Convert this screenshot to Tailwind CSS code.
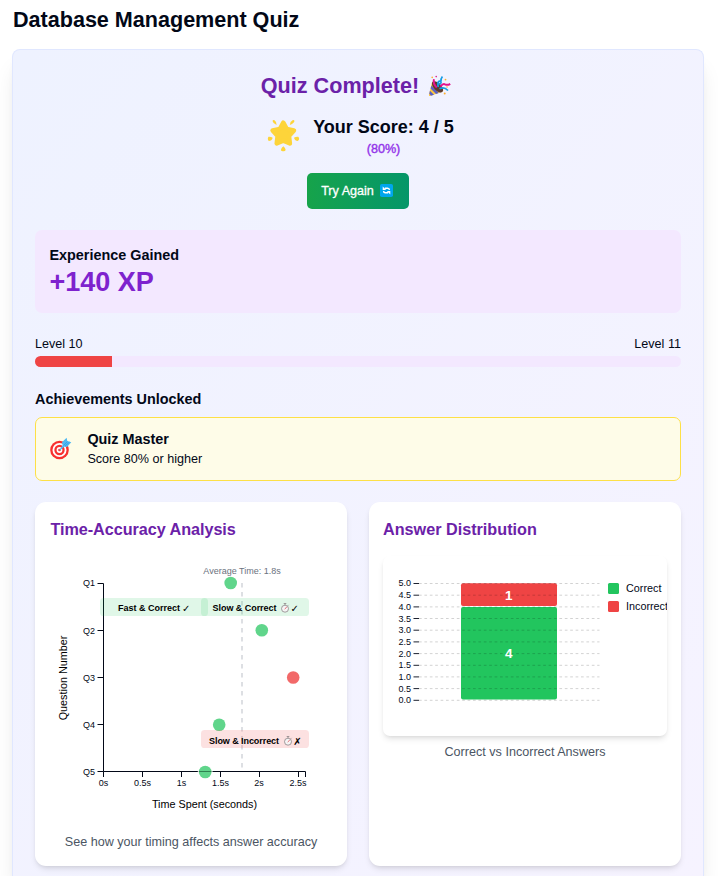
<!DOCTYPE html>
<html lang="en">
<head>
<meta charset="utf-8">
<title>Database Management Quiz</title>
<script src="https://cdn.jsdelivr.net/npm/@tailwindcss/browser@4"></script>
</head>
<body class="bg-white text-[#020817] font-['Liberation_Sans',Arial,sans-serif]">
<main class="h-[876px] overflow-hidden px-3">
  <h1 class="h-[49px] pt-[5px] pl-px text-[21.6px] leading-[29px] font-bold tracking-[-0.02px]">Database Management Quiz</h1>
  <section class="w-[692px] h-[827px] rounded-t-lg border border-b-0 border-[#e0e7ff] bg-linear-to-br from-[#eef2ff] to-[#f6f3ff] shadow-[0_18px_22.5px_-4.5px_rgba(0,0,0,0.1),0_7px_9px_-5px_rgba(0,0,0,0.1)] px-[22px] pt-[22px]">
    <div class="flex flex-col items-center">
      <h2 class="flex items-center gap-[9px] h-[27px] text-[21.6px] leading-[27px] font-bold text-[#6b21a8] mr-[4px]">Quiz Complete!
        <svg class="w-[23px] h-[22px]" viewBox="0 0 23 22">
          <path d="M4 7.5 Q8 5.5 12.500 10 Q16.500 14 14.700 16.500 L2.200 21 Q.6 21.400 1 19.500Z" fill="#ffc83d"/>
          <path d="M3.400 10.500 L10.800 17.900 L8 18.900 L2.600 13.500Z M1.900 15.800 L6 19.700 L3 20.700 L1.300 18.800Z" fill="#5b62c5"/>
          <ellipse cx="9.500" cy="11.800" rx="3.700" ry="7" transform="rotate(-45 9.500 11.800)" fill="#5b3a2e"/>
          <path d="M8.800 12.500 Q4.600 8.500 6 4.200" fill="none" stroke="#e3148d" stroke-width="2"/>
          <path d="M10.300 12 Q9 6.800 11.400 6 Q14 6 12.600 8.500 Q11 9.500 10.300 7.500 M13 6.500 Q12.500 4 14.400 1.500 M11.500 13.700 Q16 11.200 20 15.500" fill="none" stroke="#169de4" stroke-width="1.700"/>
          <path d="M12.500 11.600 Q15 8 17 9.300 Q19.500 10.600 22.200 8.800" fill="none" stroke="#e3148d" stroke-width="2"/>
          <g fill="#ffb02e"><circle cx="4.200" cy="2.400" r=".8"/><circle cx="17.500" cy="4.600" r=".9"/><circle cx="16.700" cy="18.500" r="1"/><circle cx="19" cy="12" r=".8"/></g>
          <circle cx="8.200" cy="1.600" r=".8" fill="#d91d87"/>
        </svg>
      </h2>
      <div class="flex gap-[13px] mt-[14px] h-[47px] mr-[-6px]">
        <svg class="w-[33px] h-[33px] mt-[6px] ml-[-1px]" viewBox="0 0 33 33" fill="#fdd43a">
          <path d="M16.300 3.600 L19.800 10 L27 11.400 L22 16.900 L22.900 24.400 L16.300 21.600 L9.700 24.400 L10.600 16.900 L5.600 11.400 L12.800 10Z" stroke="#fdd43a" stroke-width="4.500" stroke-linejoin="round"/>
          <path d="M5.500 2 Q6 .5 7.500 1.200 Q9.500 2.400 9.600 6 Q6 4.600 5.500 2ZM27.500 2 Q27 .5 25.500 1.200 Q23 2.400 22.800 6 Q26.800 4.600 27.500 2ZM1.500 17.800 Q4 17.600 5.700 18.700 Q4.800 22 1.800 22 Q0 20 1.500 17.800ZM31.200 17.800 Q28.800 17.600 27 18.700 Q28 22 30.700 22 Q33.300 20 31.200 17.800ZM16.300 27.200 Q18.500 29 18.700 31 Q18 32.500 16.300 32.300 Q14.300 32.500 13.900 31 Q14.200 29 16.300 27.200Z"/>
        </svg>
        <div class="pt-[2px] text-center">
          <div class="text-[18px] leading-[25px] font-bold">Your Score: 4 / 5</div>
          <div class="mt-[-1px] text-[12.6px] leading-[20px] text-[#9333ea] [-webkit-text-stroke:0.4px_#9333ea]">(80%)</div>
        </div>
      </div>
      <button class="mt-[13px] flex w-[102px] h-[36px] items-center justify-center gap-[6px] rounded-[5px] bg-linear-to-r from-[#16a34a] to-[#059669] pr-[2px] text-[12.6px] leading-[18px] text-white [-webkit-text-stroke:0.3px_white]">Try Again
        <svg class="w-[13px] h-[13px] mt-[-1px]" viewBox="0 0 13 13"><rect width="13" height="13" rx="1.8" fill="#00a6ed"/><path d="M4.800 4.200H7.700Q9.400 4.200 9.400 6 M8.200 8.800H5.300Q3.600 8.800 3.600 7" fill="none" stroke="white" stroke-width="1.4"/><path d="M2.700 2.600V6.100H6.200ZM10.300 10.400V6.900H6.800Z" fill="white"/></svg>
      </button>
    </div>

    <div class="mt-[21px] h-[83px] rounded-[7px] bg-[#f3e8ff] px-[14.400px] pt-[15px]">
      <h3 class="text-[14.4px] leading-[21px] font-bold">Experience Gained</h3>
      <p class="text-[27px] leading-[32px] font-bold text-[#7e22ce]">+140 XP</p>
    </div>

    <div class="mt-[22px] flex h-[21px] justify-between text-[12.6px] leading-[18px]"><span>Level 10</span><span>Level 11</span></div>
    <div class="h-[11px] overflow-hidden rounded-full bg-[#f3e8ff]"><div class="h-full w-[77px] bg-[#ef4444]"></div></div>

    <h3 class="mt-[22px] h-[28px] text-[14.4px] leading-[21px] font-bold">Achievements Unlocked</h3>
    <div class="flex h-[64px] items-center gap-[15px] rounded-[7px] border border-[#fde047] bg-[#fefce8] px-[13.400px] pb-px">
      <svg class="w-[23px] h-[23px]" viewBox="0 0 23 23">
        <circle cx="10.500" cy="13" r="9.300" fill="#f8312f"/><circle cx="10.500" cy="13" r="7" fill="white"/><circle cx="10.500" cy="13" r="5.200" fill="#f8312f"/><circle cx="10.500" cy="13" r="2.900" fill="white"/><circle cx="10.500" cy="13" r="1.300" fill="#f8312f"/>
        <path d="M10.200 13 L13.600 8.500 L13 5.200 L17.600 .8 L18.300 4 L22.300 5.200 L18 10 L15 9.800 L11 13.600Z" fill="#50b9f2"/>
        <path d="M14.500 8.500 L18.500 4.500 M16 9 L20.500 5" stroke="#2796e0" stroke-width=".6"/>
      </svg>
      <div>
        <div class="text-[14.4px] leading-[21px] font-bold">Quiz Master</div>
        <div class="text-[12.6px] leading-[19px]">Score 80% or higher</div>
      </div>
    </div>

    <div class="mt-[21px] grid grid-cols-2 gap-[22px]">
      <article class="h-[364px] rounded-[11px] bg-white px-[14px] pt-[15px] shadow-md">
        <h3 class="h-[37px] pl-[1.400px] text-[16.2px] leading-[25px] font-bold text-[#6b21a8] tracking-[-0.04px]">Time-Accuracy Analysis</h3>
        <svg class="block w-[284px] h-[270px]" viewBox="49 554 284 270" font-family="Liberation Sans, Arial, sans-serif" fill="#020817">
          <path d="M97.5 583.5H103.5V771.5H97.5M97.5 630.5H103.5M97.5 677.5H103.5M97.5 724.5H103.5" fill="none" stroke="#020817"/>
          <path d="M103.5 777V771.5H305.5V777M142.5 771.5V777M181.5 771.5V777M220.5 771.5V777M259.5 771.5V777M298.5 771.5V777" fill="none" stroke="#020817"/>
          <g font-size="9" text-anchor="end">
            <text x="95" y="586">Q1</text><text x="95" y="633.5">Q2</text><text x="95" y="680.5">Q3</text><text x="95" y="728">Q4</text><text x="95" y="775">Q5</text>
          </g>
          <g font-size="9" text-anchor="middle">
            <text x="103.5" y="786">0s</text><text x="142.5" y="786">0.5s</text><text x="181.5" y="786">1s</text><text x="220.5" y="786">1.5s</text><text x="259" y="786">2s</text><text x="298" y="786">2.5s</text>
          </g>
          <text x="204.500" y="808" font-size="10.8" text-anchor="middle" fill="#000">Time Spent (seconds)</text>
          <text transform="translate(67 678) rotate(-90)" font-size="10.8" text-anchor="middle" fill="#000">Question Number</text>
          <circle cx="205.200" cy="772" r="7.500" fill="white" opacity=".8"/>
          <g fill="#22c55e"><circle cx="230.700" cy="583" r="6.300" opacity=".72"/><circle cx="261.800" cy="630.300" r="6.300" opacity=".72"/><circle cx="219.200" cy="724.700" r="6.300" opacity=".72"/><circle cx="205.200" cy="772" r="6.300" opacity=".72"/></g>
          <circle cx="293.200" cy="677.500" r="6.300" fill="#ef4444" opacity=".8"/>
          <path d="M199 771.500H211.500" stroke="#0b3b22" stroke-opacity=".5"/>
          <path d="M242 583V771" stroke="#d5d7dd" stroke-width="1.600" stroke-dasharray="4.500 4.500"/>
          <text x="242" y="574" font-size="9" text-anchor="middle" fill="#6b7280">Average Time: 1.8s</text>
          <g fill="#22c55e"><rect x="100" y="598" width="108" height="18" rx="3.600" fill-opacity=".14"/><rect x="201" y="598" width="108" height="18" rx="3.600" fill-opacity=".14"/></g>
          <rect x="201" y="730" width="108" height="18" rx="3.600" fill="#ef4444" fill-opacity=".16"/>
          <g font-size="9" font-weight="bold" fill="#000">
            <text x="118" y="611" textLength="62">Fast &amp; Correct</text><text x="182" y="611.500" font-size="10" font-family="DejaVu Sans">✓</text>
            <text x="212.500" y="611" textLength="64">Slow &amp; Correct</text><text x="290.500" y="611.500" font-size="10" font-family="DejaVu Sans">✓</text>
            <text x="209" y="744" textLength="70">Slow &amp; Incorrect</text><text x="293.300" y="744.500" font-size="10" font-family="DejaVu Sans">✗</text>
          </g>
          <g fill="#f5f5f5" stroke="#8b8487" stroke-width=".8">
            <g id="watch"><circle cx="285" cy="608.700" r="3.500"/><path d="M285 605V603.600M283.700 603.500H286.300M287.800 605.700L288.600 604.900" fill="none"/><path d="M284.700 609L286.800 607" stroke="#e03c46"/></g>
            <use href="#watch" x="3" y="133"/>
          </g>
        </svg>
        <p class="mt-[9px] text-center text-[12.6px] leading-[18px] text-[#4b5563]">See how your timing affects answer accuracy</p>
      </article>

      <article class="h-[364px] rounded-[11px] bg-white px-[14px] pt-[15px] shadow-md">
        <h3 class="h-[39px] text-[16.2px] leading-[25px] font-bold text-[#6b21a8]">Answer Distribution</h3>
        <div class="h-[180px] overflow-hidden rounded-[7px] bg-white shadow-md">
          <svg class="block w-[284px] h-[180px]" viewBox="383 556 284 180" font-family="Liberation Sans, Arial, sans-serif" fill="#020817">
            <rect x="461" y="583.300" width="96" height="22.700" rx="2" fill="#ef4444"/><rect x="461" y="607" width="96" height="92.500" rx="2" fill="#22c55e"/>
            <path d="M419 583.500H599.500M419 595.200H599.500M419 606.900H599.500M419 618.500H599.500M419 630.200H599.500M419 641.900H599.500M419 653.600H599.500M419 665.300H599.500M419 676.900H599.500M419 688.600H599.500M419 700.300H599.500" stroke="#000" stroke-opacity=".2" stroke-width=".9" stroke-dasharray="2.700 2.700"/>
            <path d="M413.500 583.500H419M413.500 595.200H419M413.500 606.900H419M413.500 618.500H419M413.500 630.200H419M413.500 641.900H419M413.500 653.600H419M413.500 665.300H419M413.500 676.900H419M413.500 688.600H419M413.500 700.300H419" stroke="#020817" stroke-width=".9"/>
            <g font-size="9" text-anchor="end">
              <text x="411" y="586">5.0</text><text x="411" y="598">4.5</text><text x="411" y="610">4.0</text><text x="411" y="621.500">3.5</text><text x="411" y="633">3.0</text><text x="411" y="645">2.5</text><text x="411" y="656.500">2.0</text><text x="411" y="668">1.5</text><text x="411" y="680">1.0</text><text x="411" y="691.500">0.5</text><text x="411" y="703">0.0</text>
            </g>
            <g font-size="13.500" font-weight="bold" text-anchor="middle" fill="white"><text x="508.700" y="600">1</text><text x="508.700" y="658">4</text></g>
            <rect x="608" y="583" width="11" height="11" rx="1.500" fill="#22c55e"/><rect x="608" y="601" width="11" height="11" rx="1.500" fill="#ef4444"/>
            <g font-size="10.800"><text x="626" y="592">Correct</text><text x="626" y="610">Incorrect</text></g>
          </svg>
        </div>
        <p class="mt-[7px] text-center text-[12.6px] leading-[18px] text-[#4b5563]">Correct vs Incorrect Answers</p>
      </article>
    </div>
  </section>
</main>
</body>
</html>
